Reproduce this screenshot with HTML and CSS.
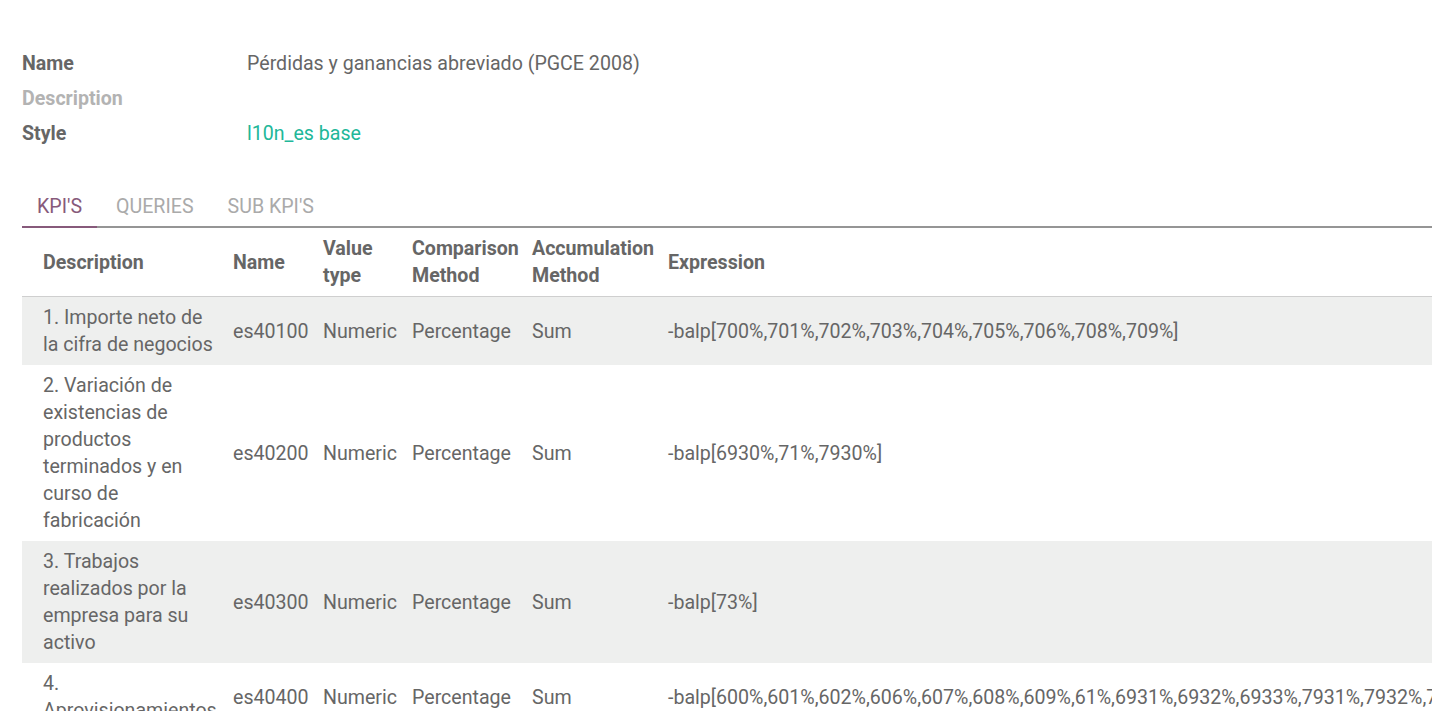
FILE: index.html
```html
<!DOCTYPE html>
<html>
<head>
<meta charset="utf-8">
<link rel="stylesheet" href="styles.css">
</head>
<body>
<div class="sheet">
  <div class="fields">
    <div class="field"><span class="label">Name</span><span class="value">Pérdidas y ganancias abreviado (PGCE 2008)</span></div>
    <div class="field"><span class="label muted">Description</span><span class="value"></span></div>
    <div class="field"><span class="label">Style</span><span class="value link">l10n_es base</span></div>
  </div>
  <div class="tabs">
    <div class="tab active">KPI'S</div>
    <div class="tab">QUERIES</div>
    <div class="tab">SUB KPI'S</div>
  </div>
  <div class="table-wrap">
    <table class="list">
      <colgroup>
        <col class="c-desc"><col class="c-name"><col class="c-type"><col class="c-cmp"><col class="c-acc"><col class="c-expr">
      </colgroup>
      <thead>
        <tr>
          <th>Description</th><th>Name</th><th>Value type</th><th>Comparison Method</th><th>Accumulation Method</th><th>Expression</th>
        </tr>
      </thead>
      <tbody>
        <tr class="odd">
          <td>1. Importe neto de la cifra de negocios</td><td>es40100</td><td>Numeric</td><td>Percentage</td><td>Sum</td><td class="expr">-balp[700%,701%,702%,703%,704%,705%,706%,708%,709%]</td>
        </tr>
        <tr>
          <td>2. Variación de existencias de productos terminados y en curso de fabricación</td><td>es40200</td><td>Numeric</td><td>Percentage</td><td>Sum</td><td class="expr">-balp[6930%,71%,7930%]</td>
        </tr>
        <tr class="odd">
          <td>3. Trabajos realizados por la empresa para su activo</td><td>es40300</td><td>Numeric</td><td>Percentage</td><td>Sum</td><td class="expr">-balp[73%]</td>
        </tr>
        <tr>
          <td>4. Aprovisionamientos</td><td>es40400</td><td>Numeric</td><td>Percentage</td><td>Sum</td><td class="expr">-balp[600%,601%,602%,606%,607%,608%,609%,61%,6931%,6932%,6933%,7931%,7932%,7933%]</td>
        </tr>
      </tbody>
    </table>
  </div>
</div>
</body>
</html>
```
FILE: styles.css
```css
html, body {
  margin: 0;
  padding: 0;
  background: #ffffff;
}
body {
  font-family: Roboto, "Noto Sans", sans-serif;
  font-size: 19.6px;
  line-height: 27px;
  color: #666666;
  overflow: hidden;
  height: 711px;
}
.sheet {
  padding: 50px 20px 0 22px;
}
.fields {
  display: flex;
  flex-direction: column;
  gap: 8px;
}
.field {
  display: flex;
  height: 27px;
}
.label {
  width: 225px;
  font-weight: 700;
  color: #666666;
}
.label.muted {
  color: #b3b3b3;
}
.value {
  color: #666666;
}
.value.link {
  color: #21b799;
}
.tabs {
  display: flex;
  gap: 4px;
  margin-top: 44px;
  border-bottom: 2px solid #959595;
}
.tab {
  padding: 2px 15px 6px;
  color: #aaaaaa;
  margin-bottom: -2px;
  border-bottom: 2px solid transparent;
}
.tab.active {
  color: #875a7b;
  border-bottom-color: #875a7b;
}
.table-wrap {
  width: 1410px;
  overflow: hidden;
}
.list {
  border-collapse: collapse;
  table-layout: fixed;
  width: 1410px;
}
.c-desc { width: 201px; }
.c-name { width: 90px; }
.c-type { width: 89px; }
.c-cmp { width: 120px; }
.c-acc { width: 136px; }
.list th, .list td {
  padding: 7px 10px;
  text-align: left;
  vertical-align: middle;
}
.list th:first-child, .list td:first-child {
  padding-left: 21px;
}
.list th {
  font-weight: 700;
  color: #666666;
  border-bottom: 1px solid #cfcfcf;
}
.list td {
  color: #666666;
}
.list td.expr {
  white-space: nowrap;
  overflow: visible;
}
.list tr.odd td {
  background: #eeefee;
}
```
